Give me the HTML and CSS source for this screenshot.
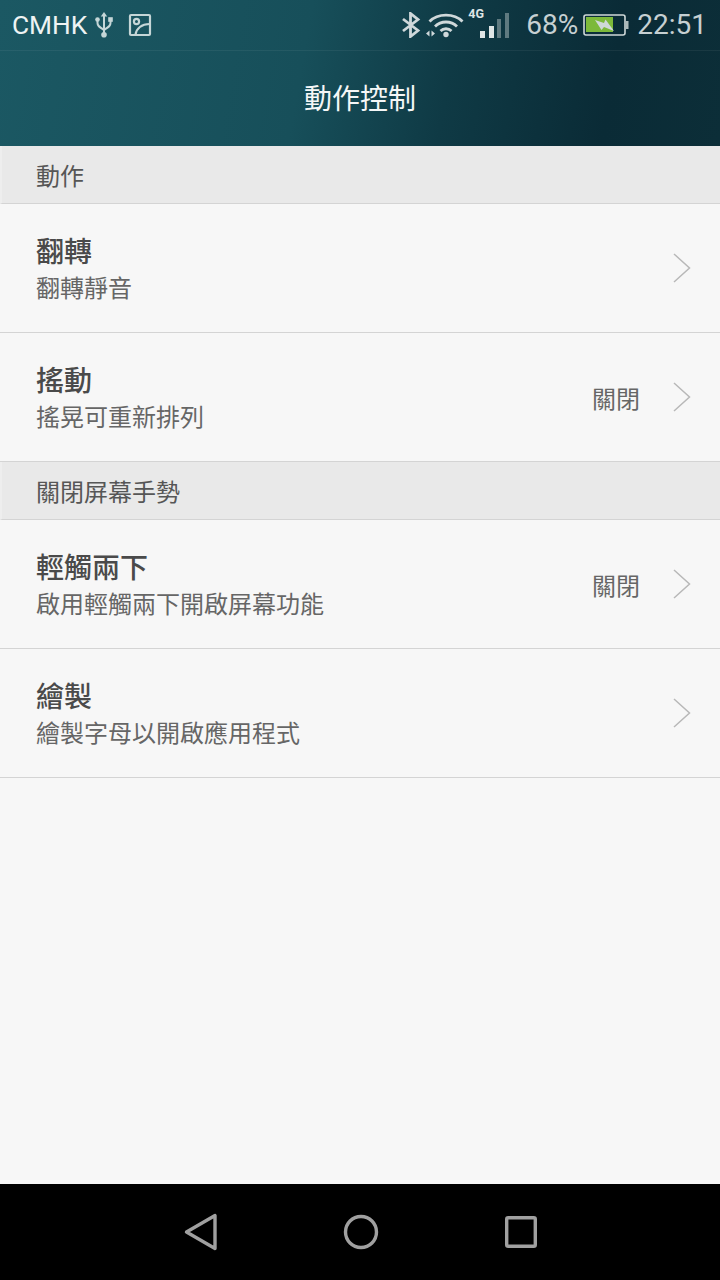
FILE: index.html
```html
<!DOCTYPE html>
<html lang="zh-Hant">
<head>
<meta charset="utf-8">
<title>動作控制</title>
<link rel="stylesheet" href="styles.css">
</head>
<body>
<div class="screen">
  <header class="top">
    <div class="status">
      <div class="status-left">
        <span class="carrier">CMHK</span>
        <svg class="ic-usb" width="18" height="26" viewBox="0 0 18 26"><g fill="none" stroke="#c5d6d7" stroke-width="2"><path d="M9 3v20"/><path d="M2.500 8v3c0 3 2 4 6.500 7 4.500-3 6.500-4 6.500-7V8"/></g><path d="M9 0l3.200 4.500H5.800z" fill="#c5d6d7"/><circle cx="9" cy="22.800" r="2.800" fill="#c5d6d7"/><circle cx="2.500" cy="7.500" r="2.300" fill="#c5d6d7"/><rect x="13.200" y="5.200" width="4.600" height="4.600" fill="#c5d6d7"/></svg>
        <svg class="ic-pic" width="24" height="24" viewBox="0 0 24 24" fill="none" stroke="#c5d6d7" stroke-width="2.200"><rect x="2" y="2" width="20" height="20" rx="1"/><circle cx="8.500" cy="8.500" r="2.600"/><path d="M7.500 21.500c1-6 6-10.500 14-10.500"/></svg>
      </div>
      <div class="status-right">
        <svg class="ic-bt" width="20" height="26" viewBox="0 0 20 26" fill="none" stroke="#cfd8da" stroke-width="2.800"><path d="M2 7l15 11.500L9.500 24.500V1.500L17 7.500 2 19"/></svg>
        <svg class="ic-wifi" width="38" height="26" viewBox="0 0 38 26"><g fill="none" stroke="#cfd8da" stroke-width="2.800"><path d="M3.500 9.500C12 1 28 1 36.500 9.500"/><path d="M9 14.500C15 8.500 25 8.500 31 14.500"/><path d="M14.500 19C17.500 16 22.500 16 25.500 19"/></g><circle cx="20" cy="22.500" r="2.700" fill="#cfd8da"/><path d="M0 21.500l3.500-3v6zM5.500 18.500l3.500 3-3.500 3z" fill="#cfd8da"/></svg>
        <span class="sig">
          <span class="net">4G</span>
          <svg width="30" height="26" viewBox="0 0 30 26"><rect x="1" y="18" width="5" height="7" fill="#dfe6e6"/><rect x="10" y="13" width="5" height="12" fill="#dfe6e6"/><rect x="18" y="6" width="4" height="19" fill="#5f7a80"/><rect x="26" y="0" width="4" height="25" fill="#5f7a80"/></svg>
        </span>
        <span class="pct">68%</span>
        <svg class="ic-bat" width="46" height="24" viewBox="0 0 46 24"><rect x="1" y="2" width="41" height="20" rx="2" fill="none" stroke="#cfd8d8" stroke-width="1.600"/><rect x="42.500" y="8" width="3" height="8" fill="#aebbbb"/><rect x="3" y="4" width="27" height="15" fill="#7cb93a"/><path d="M12 7l9 3 1.500-3.500L31 18l-10-4-2.500 3z" fill="#cfd8d8"/></svg>
        <span class="clock">22:51</span>
      </div>
    </div>
    <h1 class="title">動作控制</h1>
  </header>

  <main class="list">
    <div class="section">動作</div>
    <div class="row">
      <div class="text"><div class="name">翻轉</div><div class="desc">翻轉靜音</div></div>
      <svg class="chev" width="18" height="30" viewBox="0 0 18 30"><path d="M1 1l15.500 14L1 29" fill="none" stroke="#b8b8b8" stroke-width="1.500"/></svg>
    </div>
    <div class="row">
      <div class="text"><div class="name">搖動</div><div class="desc">搖晃可重新排列</div></div>
      <span class="state">關閉</span>
      <svg class="chev" width="18" height="30" viewBox="0 0 18 30"><path d="M1 1l15.500 14L1 29" fill="none" stroke="#b8b8b8" stroke-width="1.500"/></svg>
    </div>
    <div class="section">關閉屏幕手勢</div>
    <div class="row">
      <div class="text"><div class="name">輕觸兩下</div><div class="desc">啟用輕觸兩下開啟屏幕功能</div></div>
      <span class="state">關閉</span>
      <svg class="chev" width="18" height="30" viewBox="0 0 18 30"><path d="M1 1l15.500 14L1 29" fill="none" stroke="#b8b8b8" stroke-width="1.500"/></svg>
    </div>
    <div class="row">
      <div class="text"><div class="name">繪製</div><div class="desc">繪製字母以開啟應用程式</div></div>
      <svg class="chev" width="18" height="30" viewBox="0 0 18 30"><path d="M1 1l15.500 14L1 29" fill="none" stroke="#b8b8b8" stroke-width="1.500"/></svg>
    </div>
  </main>

  <nav class="nav">
    <svg width="33" height="38" viewBox="0 0 33 38"><path d="M2.500 19L31 2.500v33z" fill="none" stroke="#a0a0a0" stroke-width="3.400" stroke-linejoin="round"/></svg>
    <svg width="36" height="36" viewBox="0 0 36 36"><circle cx="18" cy="18" r="15.500" fill="none" stroke="#a0a0a0" stroke-width="3.400"/></svg>
    <svg width="32" height="32" viewBox="0 0 32 32"><rect x="1.700" y="1.700" width="28.600" height="28.600" rx="1.500" fill="none" stroke="#a0a0a0" stroke-width="3.400"/></svg>
  </nav>
</div>
</body>
</html>
```
FILE: styles.css
```css
* { box-sizing: border-box; }
html, body { margin: 0; padding: 0; }
body {
  width: 720px;
  height: 1280px;
  overflow: hidden;
  font-family: "Noto Sans CJK TC", "Roboto", sans-serif;
  background: #f7f7f7;
}
.screen {
  width: 720px;
  height: 1280px;
  display: flex;
  flex-direction: column;
}
.top {
  height: 146px;
  flex: none;
  background: linear-gradient(100deg, #1b5863 0%, #174f5a 42%, #0f3a45 62%, #0a2b36 84%, #0c2e38 100%);
}
.status {
  height: 51px;
  border-bottom: 1px solid rgba(255, 255, 255, 0.06);
  display: flex;
  justify-content: space-between;
  align-items: center;
  padding: 0 13px 0 12px;
  font-family: "Roboto", sans-serif;
}
.status-left, .status-right { display: flex; align-items: center; }
.carrier { font-size: 26.3px; color: #eef3f3; line-height: 1; }
.ic-usb { margin-left: 8px; }
.ic-pic { margin-left: 15px; }
.ic-bt { margin-right: 5px; }
.ic-wifi { margin-right: 15px; }
.sig { position: relative; display: flex; margin-right: 17px; padding-top: 2px; }
.net {
  position: absolute;
  left: -11px;
  top: -5px;
  font-size: 12.5px;
  font-weight: 700;
  color: #dfe6e6;
}
.pct, .clock { font-size: 28px; color: #c6d0d2; line-height: 1; }
.pct { margin-right: 5px; }
.clock { margin-left: 8px; }
.title {
  margin: 0;
  height: 95px;
  line-height: 92px;
  text-align: center;
  font-size: 28px;
  font-weight: 400;
  color: #f5f7f7;
}
.list { flex: 1; }
.section {
  height: 58px;
  background: #e9e9e9;
  border-left: 2px solid #eeeeee;
  border-bottom: 1px solid #d4d4d4;
  padding-left: 34px;
  font-size: 24px;
  line-height: 57px;
  color: #565656;
}
.row {
  height: 129px;
  border-bottom: 1px solid #d4d4d4;
  display: flex;
  align-items: center;
  padding: 0 29px 0 36px;
}
.text { flex: 1; }
.name { font-size: 28px; line-height: 38px; color: #4a4a4a; font-weight: 500; }
.desc { font-size: 24px; line-height: 36px; color: #666666; }
.state { font-size: 24px; color: #666666; margin-right: 33px; }
.chev { flex: none; }
.nav {
  height: 96px;
  flex: none;
  background: #000;
  display: flex;
  align-items: center;
  padding-left: 184px;
  gap: 126px;
}
```
